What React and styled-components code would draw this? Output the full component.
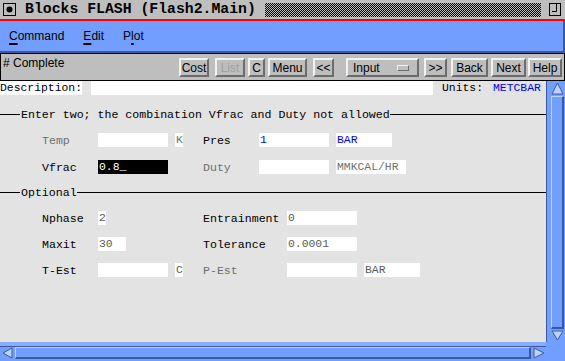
import styled, { createGlobalStyle } from "styled-components";

const BLUE = "#729fff";
const BLUE_DARK = "#3b5a9c";
const BLUE_LIGHT = "#bfd1ff";
const MONO = `"Liberation Mono", "DejaVu Sans Mono", monospace`;
const SANS = `"Liberation Sans", Arial, sans-serif`;

const GlobalStyle = createGlobalStyle`
  html, body {
    margin: 0;
    padding: 0;
    background: #e3e3e3;
  }
  body {
    width: 565px;
    height: 361px;
    overflow: hidden;
  }
  * {
    box-sizing: border-box;
  }
`;

const Window = styled.div`
  width: 565px;
  height: 361px;
  display: flex;
  flex-direction: column;
  background: #e3e3e3;
  overflow: hidden;
`;

const TitleBar = styled.div`
  height: 21px;
  flex: none;
  display: flex;
  align-items: center;
  gap: 9px;
  padding: 0 4px 0 3px;
  background: #bebebe;
  border-bottom: 2px solid #ff0000;
`;

const TitleText = styled.span`
  font: bold 14.8px ${MONO};
  color: #000;
  white-space: pre;
  line-height: 19px;
`;

const Checker = styled.div`
  flex: 1;
  height: 14px;
  background: repeating-conic-gradient(#000 0% 25%, #bebebe 0% 50%) 0 0 / 2px 2px;
  margin-right: -1px;
`;

const MenuBar = styled.div`
  height: 32px;
  flex: none;
  display: flex;
  align-items: center;
  gap: 19px;
  padding: 0 0 0 9px;
  background: ${BLUE};
  border-bottom: 2px solid ${BLUE_DARK};
  border-right: 2px solid ${BLUE_DARK};
`;

const MenuItem = styled.span`
  font: 12px ${SANS};
  color: #000;

  u {
    text-decoration: underline;
    text-underline-offset: 3px;
    text-decoration-thickness: 2px;
  }
`;

const Toolbar = styled.div`
  height: 28px;
  flex: none;
  display: flex;
  align-items: flex-end;
  padding: 0 2px 3px 2px;
  background: #bebebe;
  border: 1px solid #000;
`;

const Status = styled.span`
  flex: 1;
  align-self: flex-start;
  padding-top: 2px;
  font: 12px ${SANS};
  color: #000;
  line-height: 14px;
`;

const ToolButton = styled.div`
  width: ${(p) => p.$w}px;
  margin-left: ${(p) => p.$ml}px;
  height: 19px;
  display: flex;
  align-items: center;
  justify-content: ${(p) => (p.$menu ? "space-between" : "center")};
  padding: ${(p) => (p.$menu ? "0 8px 0 5px" : "0")};
  background: #bebebe;
  border: 2px solid;
  border-color: #f2f2f2 #6c6c6c #6c6c6c #f2f2f2;
  font: 12px ${SANS};
  color: ${(p) => (p.$off ? "#a0a0a0" : "#000")};
  white-space: pre;
`;

const Indicator = styled.span`
  width: 12px;
  height: 6px;
  background: #bebebe;
  border: 1px solid;
  border-color: #f2f2f2 #6c6c6c #6c6c6c #f2f2f2;
`;

const Body = styled.div`
  flex: 1;
  display: flex;
  min-height: 0;
`;

const Main = styled.div`
  width: 546px;
  display: flex;
  flex-direction: column;
`;

const DescRow = styled.div`
  height: 14px;
  display: flex;
  align-items: center;
  font: 11.4px ${MONO};
  color: #000;
  line-height: 14px;
`;

const DescLabel = styled.span`
  width: 82px;
  height: 14px;
  background: #fff;
`;

const DescField = styled.div`
  width: 342px;
  height: 14px;
  margin-left: 9px;
  background: #fff;
`;

const UnitsLabel = styled.span`
  margin-left: 9px;
  white-space: pre;
`;

const UnitsValue = styled.span`
  margin-left: 10px;
  color: #0000ff;
`;

const Content = styled.div`
  flex: 1;
  padding-top: 12px;
`;

const SectionHead = styled.div`
  height: 14px;
  display: flex;
  align-items: center;
  margin-top: ${(p) => p.$mt || 0}px;
  margin-bottom: 12px;
  font: 11.6px ${MONO};
  color: #000;
  white-space: pre;

  &::before {
    content: "";
    width: 20px;
    margin-right: 1px;
    border-top: 1px solid #000;
  }

  &::after {
    content: "";
    flex: 1;
    border-top: 1px solid #000;
  }
`;

const Row = styled.div`
  height: 14px;
  display: flex;
  align-items: center;
  padding-left: 42px;
  margin-bottom: ${(p) => p.$mb || 0}px;
`;

const Label = styled.span`
  width: ${(p) => p.$w}px;
  font: 11.6px ${MONO};
  color: ${(p) => (p.$dim ? "#707070" : "#000")};
  white-space: pre;
`;

const Cell = styled.div`
  width: ${(p) => p.$w}px;
  display: flex;
`;

const Field = styled.div`
  width: ${(p) => p.$w}px;
  height: 14px;
  padding-left: 1px;
  background: ${(p) => (p.$focus ? "#000" : "#fff")};
  color: ${(p) => (p.$focus ? "#fff" : p.$blue ? "#0000ff" : p.$dim ? "#707070" : "#5c5c5c")};
  font: 11.4px ${MONO};
  line-height: 14px;
  white-space: pre;
  overflow: hidden;
`;

const VScroll = styled.div`
  width: 19px;
  display: flex;
  flex-direction: column;
  gap: 1px;
  padding: 1px 1px 1px 4px;
  background: ${BLUE};
  border-left: 1px solid ${BLUE_DARK};
`;

const HScrollRow = styled.div`
  height: 19px;
  flex: none;
  display: flex;
`;

const HScroll = styled.div`
  width: 546px;
  display: flex;
  gap: 2px;
  padding: 1px 1px 2px 2px;
  background: ${BLUE};
  border-top: 4px solid #86adff;
  border-bottom: 0;
  box-shadow: inset 0 1px 0 ${BLUE_DARK};
`;

const Corner = styled.div`
  flex: 1;
  background: ${BLUE};
`;

const Thumb = styled.div`
  flex: 1;
  background: ${BLUE};
  border: 1px solid;
  border-color: ${BLUE_LIGHT} ${BLUE_DARK} ${BLUE_DARK} ${BLUE_LIGHT};
  border-width: 1px 2px 2px 1px;
`;

const ArrowBox = styled.div`
  flex: none;
  width: ${(p) => p.$w}px;
  height: ${(p) => p.$h}px;
  display: flex;
`;

function Arrow({ dir, w, h }) {
  const pts = {
    up: `${w / 2},1 ${w - 1},${h - 1} 1,${h - 1}`,
    down: `1,1 ${w - 1},1 ${w / 2},${h - 1}`,
    left: `1,${h / 2} ${w - 1},1 ${w - 1},${h - 1}`,
    right: `1,1 ${w - 1},${h / 2} 1,${h - 1}`,
  }[dir];
  return (
    <ArrowBox $w={w} $h={h}>
      <svg width={w} height={h} viewBox={`0 0 ${w} ${h}`}>
        <rect x="0" y="0" width={w} height={h} fill={BLUE} />
        <polygon points={pts} fill={BLUE_LIGHT} stroke={BLUE_DARK} strokeWidth="1" />
      </svg>
    </ArrowBox>
  );
}

function WinIcon() {
  return (
    <svg width="13" height="13" viewBox="0 0 13 13">
      <rect x="0.5" y="0.5" width="12" height="12" fill="#bebebe" stroke="#000" />
      <circle cx="6.5" cy="6.5" r="3" fill="#000" />
    </svg>
  );
}

function MaxIcon() {
  return (
    <svg width="12" height="13" viewBox="0 0 12 13">
      <rect x="0.5" y="0.5" width="11" height="12" fill="none" stroke="#000" />
      <path d="M7.5 1 V8.5 H3" fill="none" stroke="#000" />
    </svg>
  );
}

export default function App() {
  return (
    <>
      <GlobalStyle />
      <Window>
        <TitleBar>
          <WinIcon />
          <TitleText>Blocks FLASH (Flash2.Main)</TitleText>
          <Checker />
          <MaxIcon />
        </TitleBar>

        <MenuBar>
          <MenuItem><u>C</u>ommand</MenuItem>
          <MenuItem><u>E</u>dit</MenuItem>
          <MenuItem>P<u>l</u>ot</MenuItem>
        </MenuBar>

        <Toolbar>
          <Status># Complete</Status>
          <ToolButton $w={30} $ml={0}>Cost</ToolButton>
          <ToolButton $w={30} $ml={6} $off>List</ToolButton>
          <ToolButton $w={17} $ml={3}>C</ToolButton>
          <ToolButton $w={39} $ml={3}>Menu</ToolButton>
          <ToolButton $w={21} $ml={6}>&lt;&lt;</ToolButton>
          <ToolButton $w={73} $ml={12} $menu>
            Input
            <Indicator />
          </ToolButton>
          <ToolButton $w={23} $ml={5}>&gt;&gt;</ToolButton>
          <ToolButton $w={37} $ml={4}>Back</ToolButton>
          <ToolButton $w={35} $ml={3}>Next</ToolButton>
          <ToolButton $w={34} $ml={2}>Help</ToolButton>
        </Toolbar>

        <Body>
          <Main>
            <DescRow>
              <DescLabel>Description:</DescLabel>
              <DescField />
              <UnitsLabel>Units:</UnitsLabel>
              <UnitsValue>METCBAR</UnitsValue>
            </DescRow>

            <Content>
              <SectionHead>Enter two; the combination Vfrac and Duty not allowed</SectionHead>
              <Row $mb={13}>
                <Label $w={56} $dim>Temp</Label>
                <Cell $w={77}><Field $w={70} /></Cell>
                <Cell $w={28}><Field $w={8} $dim>K</Field></Cell>
                <Label $w={56}>Pres</Label>
                <Cell $w={77}><Field $w={70} $blue>1</Field></Cell>
                <Field $w={56} $blue>BAR</Field>
              </Row>
              <Row>
                <Label $w={56}>Vfrac</Label>
                <Cell $w={77}><Field $w={70} $focus>0.8_</Field></Cell>
                <Cell $w={28} />
                <Label $w={56} $dim>Duty</Label>
                <Cell $w={77}><Field $w={70} /></Cell>
                <Field $w={70} $dim>MMKCAL/HR</Field>
              </Row>

              <SectionHead $mt={11}>Optional</SectionHead>
              <Row $mb={12}>
                <Label $w={56}>Nphase</Label>
                <Cell $w={105}><Field $w={8}>2</Field></Cell>
                <Label $w={84}>Entrainment</Label>
                <Cell $w={77}><Field $w={70}>0</Field></Cell>
              </Row>
              <Row $mb={12}>
                <Label $w={56}>Maxit</Label>
                <Cell $w={105}><Field $w={28}>30</Field></Cell>
                <Label $w={84}>Tolerance</Label>
                <Cell $w={77}><Field $w={70}>0.0001</Field></Cell>
              </Row>
              <Row>
                <Label $w={56}>T-Est</Label>
                <Cell $w={77}><Field $w={70} /></Cell>
                <Cell $w={28}><Field $w={8}>C</Field></Cell>
                <Label $w={84} $dim>P-Est</Label>
                <Cell $w={77}><Field $w={70} /></Cell>
                <Field $w={56}>BAR</Field>
              </Row>
            </Content>
          </Main>

          <VScroll>
            <Arrow dir="up" w={13} h={13} />
            <Thumb />
            <Arrow dir="down" w={13} h={11} />
          </VScroll>
        </Body>

        <HScrollRow>
          <HScroll>
            <Arrow dir="left" w={11} h={12} />
            <Thumb />
            <Arrow dir="right" w={12} h={12} />
          </HScroll>
          <Corner />
        </HScrollRow>
      </Window>
    </>
  );
}
